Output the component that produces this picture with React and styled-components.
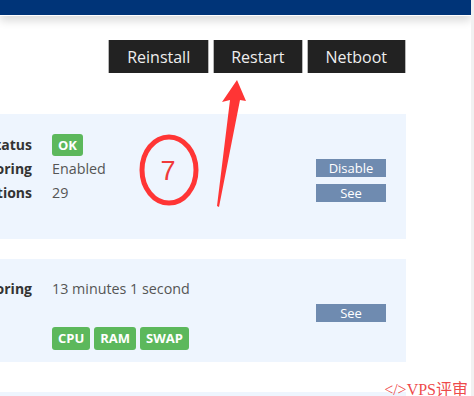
import React from 'react';
import styled, { createGlobalStyle } from 'styled-components';

const GlobalStyle = createGlobalStyle`
  html, body {
    margin: 0;
    padding: 0;
    background: #f1f1f1;
    overflow: hidden;
    font-family: "Open Sans", "Noto Sans", sans-serif;
  }
`;

const Page = styled.div`
  position: relative;
  width: 471px;
  height: 396px;
  background: #fff;
  overflow: hidden;
`;

const Header = styled.div`
  height: 15px;
  background: #003478;
  border-bottom: 1px solid #fff;
  box-shadow: 0 5px 8px rgba(0, 0, 0, 0.14);
`;

const Actions = styled.div`
  display: flex;
  justify-content: flex-end;
  gap: 4px;
  margin-top: 24px;
  padding-right: 65px;
`;

const ActionButton = styled.button`
  height: 33px;
  padding: 0 ${(p) => p.$pad}px;
  background: #222;
  color: #eee;
  border: none;
  border-left: 1px solid #b8b8b8;
  border-right: 1px solid #b8b8b8;
  font-family: "Open Sans", sans-serif;
  font-size: 16px;
  cursor: pointer;
`;

const Panel = styled.section`
  margin-top: ${(p) => p.$top}px;
  margin-right: 65px;
  background: #eef5fe;
  padding: ${(p) => p.$pad};
  height: ${(p) => p.$height}px;
  box-sizing: border-box;
`;

// label column runs off the left edge, as in the cropped screen
const Grid = styled.div`
  display: grid;
  grid-template-columns: 100px 1fr 70px;
  column-gap: 20px;
  margin-left: -68px;
  padding-right: 20px;
`;

const Label = styled.div`
  text-align: right;
  font-weight: 700;
  font-size: 14px;
  line-height: 24px;
  color: #333;
  white-space: nowrap;
`;

const Value = styled.div`
  font-size: 14.3px;
  line-height: 24px;
  color: #555;
  display: flex;
  align-items: center;
  gap: 4px;
  margin-top: ${(p) => p.$top || 0}px;
`;

const Badge = styled.span`
  display: inline-block;
  height: ${(p) => p.$h}px;
  line-height: ${(p) => p.$h}px;
  padding: 0 6px;
  background: #5cb85c;
  color: #fff;
  font-weight: 700;
  font-size: 13px;
  border-radius: 3px;
`;

const Side = styled.div`
  grid-column: 3;
  grid-row: 1 / span ${(p) => p.$span};
  display: flex;
  flex-direction: column;
  gap: 7px;
  margin-top: ${(p) => p.$top}px;
`;

const SmallButton = styled.button`
  width: 70px;
  height: 18px;
  padding: 0;
  border: none;
  background: #6f8bb0;
  color: #fff;
  font-family: "Open Sans", sans-serif;
  font-size: 13px;
  line-height: 18px;
  text-align: center;
`;

const Annotation = styled.svg`
  position: absolute;
  left: 0;
  top: 0;
  pointer-events: none;
`;

const Watermark = styled.div`
  position: absolute;
  right: 3px;
  top: 376px;
  font-family: "Liberation Serif", "Noto Sans CJK SC", serif;
  font-size: 16px;
  color: rgba(235, 40, 40, 0.85);
`;

export default function App() {
  return (
    <>
      <GlobalStyle />
      <Page>
        <Header />
        <Actions>
          <ActionButton $pad={18}>Reinstall</ActionButton>
          <ActionButton $pad={17}>Restart</ActionButton>
          <ActionButton $pad={18}>Netboot</ActionButton>
        </Actions>

        <Panel $top={41} $pad="19px 0 0 0" $height={125}>
          <Grid>
            <Label>Status</Label>
            <Value>
              <Badge $h={22}>OK</Badge>
            </Value>
            <Side $span={3} $top={26}>
              <SmallButton>Disable</SmallButton>
              <SmallButton>See</SmallButton>
            </Side>
            <Label>Monitoring</Label>
            <Value>Enabled</Value>
            <Label>Notifications</Label>
            <Value>29</Value>
          </Grid>
        </Panel>

        <Panel $top={20} $pad="18px 0 0 0" $height={103}>
          <Grid>
            <Label>Monitoring</Label>
            <Value>13 minutes 1 second</Value>
            <Side $span={2} $top={27}>
              <SmallButton>See</SmallButton>
            </Side>
            <div />
            <Value $top={26}>
              <Badge $h={23}>CPU</Badge>
              <Badge $h={23}>RAM</Badge>
              <Badge $h={23}>SWAP</Badge>
            </Value>
          </Grid>
        </Panel>

        <Panel $top={30} $pad="0" $height={40} />

        <Annotation width="471" height="396" viewBox="0 0 471 396">
          <ellipse cx="169" cy="170" rx="27" ry="33" fill="none" stroke="#ff3535" strokeWidth="5" />
          <text x="168" y="180" textAnchor="middle" fontSize="27" fill="#f03a3a" fontFamily="Liberation Sans, sans-serif">7</text>
          <polygon
            points="237,80 246,101 240,100 219,207 217,206 230,100 222,102"
            fill="#ff3535"
          />
        </Annotation>

        <Watermark>&lt;/&gt;VPS评审</Watermark>
      </Page>
    </>
  );
}
